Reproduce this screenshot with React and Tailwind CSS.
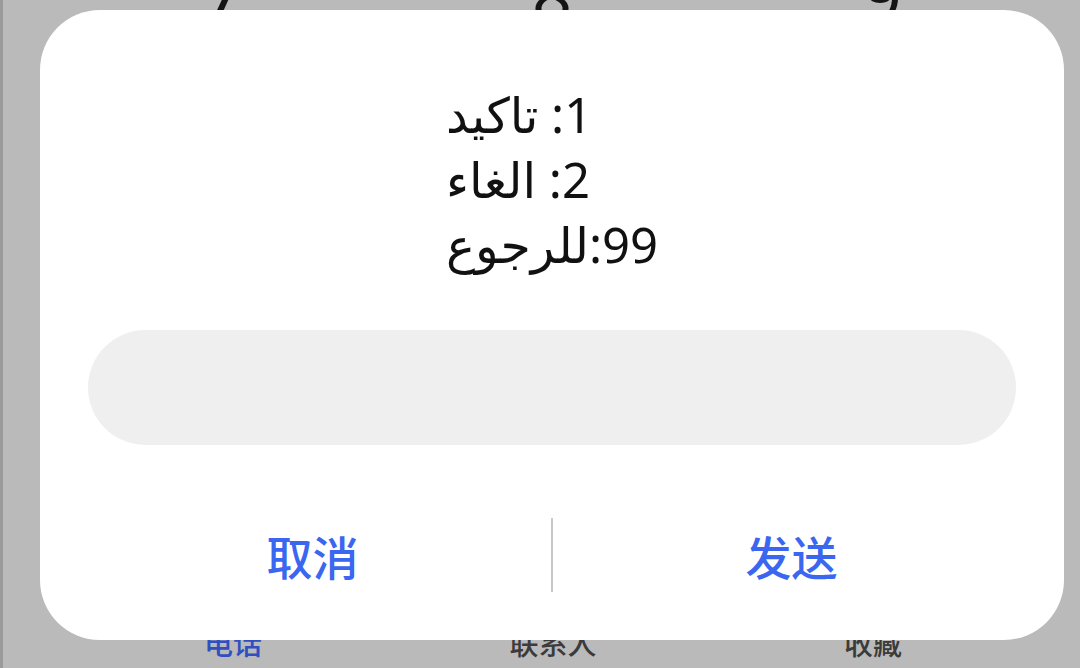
import React from 'react';

const lines = ['1: تاكيد', '2: الغاء', '99:للرجوع'];

const App = () => {
  return (
    <div className="relative w-[1080px] h-[668px] overflow-hidden bg-[#bababa] border-l-[3px] border-[#9a9a9a] flex flex-col justify-between font-['Noto_Sans','DejaVu_Sans',sans-serif]">
      {/* dial pad row peeking above the dialog */}
      <div className="flex pl-[54px] -mt-[40px] text-[70px] leading-none text-[#151515]">
        <span className="w-[330px] text-center">7</span>
        <span className="w-[330px] text-center">8</span>
        <span className="w-[330px] text-center">9</span>
      </div>

      {/* bottom tabs */}
      <div className="flex pl-[70px] pb-[8px] text-[29px] leading-[36px] font-medium font-['Noto_Sans_CJK_SC',sans-serif]">
        <span className="w-[320px] text-center text-[#2f4fc2]">电话</span>
        <span className="w-[320px] text-center text-[#3b3b3b]">联系人</span>
        <span className="w-[320px] text-center text-[#3b3b3b]">收藏</span>
      </div>

      {/* dialog */}
      <div className="absolute top-[10px] left-[37px] w-[1024px] h-[630px] bg-white rounded-[60px] flex flex-col pt-[72px] px-[48px]">
        <div className="self-center inline-block text-[49px] leading-[65px] text-[#111]">
          {lines.map((line) => (
            <div key={line} dir="rtl" className="text-left">
              {line}
            </div>
          ))}
        </div>

        <div className="mt-[53px] h-[115px] rounded-full bg-[#efefef]" />

        <div className="mt-[73px] -mx-[14px] h-[74px] flex items-center font-['Noto_Sans_CJK_SC',sans-serif] text-[46px] font-medium text-[#3a66f0]">
          <button className="flex-1 text-center">取消</button>
          <div className="w-[2px] h-full bg-[#c8c8c8]" />
          <button className="flex-1 text-center">发送</button>
        </div>
      </div>
    </div>
  );
};

export default App;
